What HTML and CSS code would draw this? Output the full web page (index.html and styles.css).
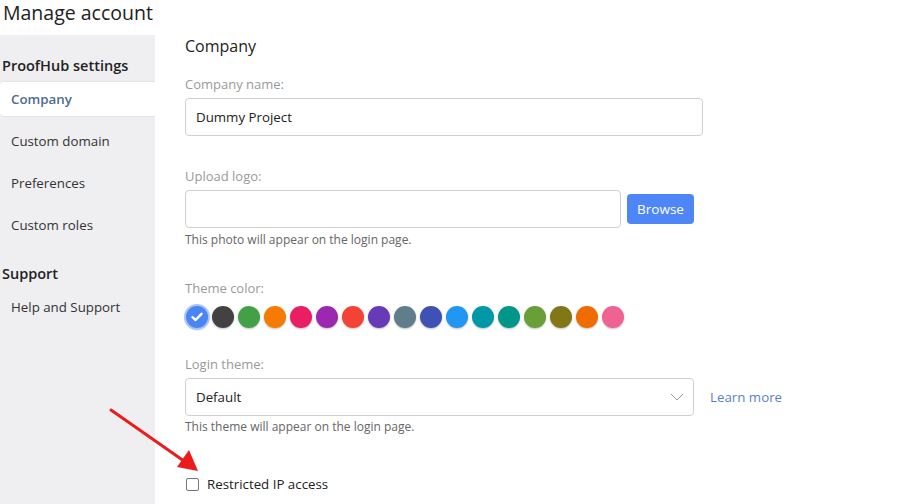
FILE: index.html
```html
<!DOCTYPE html>
<html>
<head>
<meta charset="utf-8">
<link rel="stylesheet" href="styles.css">
</head>
<body>
<header class="top">Manage account</header>
<div class="layout">
  <nav class="sidebar">
    <div class="group-title first">ProofHub settings</div>
    <div class="item active">Company</div>
    <div class="item">Custom domain</div>
    <div class="item">Preferences</div>
    <div class="item">Custom roles</div>
    <div class="group-title">Support</div>
    <div class="item">Help and Support</div>
  </nav>
  <main class="main">
    <h1 class="title">Company</h1>

    <div class="label l-first">Company name:</div>
    <div class="field w-name">Dummy Project</div>

    <div class="label">Upload logo:</div>
    <div class="upload-row">
      <div class="field w-upload"></div>
      <button class="browse">Browse</button>
    </div>
    <div class="help">This photo will appear on the login page.</div>

    <div class="label">Theme color:</div>
    <div class="swatches">
      <span class="sw selected" style="background:#4b85f2">
        <svg width="12" height="10" viewBox="0 0 12 10"><path d="M1.5 5.2 L4.6 8 L10.5 1.8" fill="none" stroke="#fff" stroke-width="2.4" stroke-linecap="round" stroke-linejoin="round"/></svg>
      </span>
      <span class="sw" style="background:#424242"></span>
      <span class="sw" style="background:#43a047"></span>
      <span class="sw" style="background:#f57c00"></span>
      <span class="sw" style="background:#e91e63"></span>
      <span class="sw" style="background:#9c27b0"></span>
      <span class="sw" style="background:#f44336"></span>
      <span class="sw" style="background:#673ab7"></span>
      <span class="sw" style="background:#607d8b"></span>
      <span class="sw" style="background:#3f51b5"></span>
      <span class="sw" style="background:#2196f3"></span>
      <span class="sw" style="background:#0097a7"></span>
      <span class="sw" style="background:#009688"></span>
      <span class="sw" style="background:#689f38"></span>
      <span class="sw" style="background:#827717"></span>
      <span class="sw" style="background:#ef6c00"></span>
      <span class="sw" style="background:#f06292"></span>
    </div>

    <div class="label l-login">Login theme:</div>
    <div class="select-row">
      <div class="field w-select select">
        <span>Default</span>
        <svg width="14" height="8" viewBox="0 0 14 8"><path d="M1 1 L7 7 L13 1" fill="none" stroke="#9a9a9a" stroke-width="1"/></svg>
      </div>
      <a class="learn">Learn more</a>
    </div>
    <div class="help help-tight">This theme will appear on the login page.</div>

    <label class="check-row">
      <span class="checkbox"></span>
      <span class="check-label">Restricted IP access</span>
    </label>
  </main>
</div>
<svg class="arrow" width="898" height="504" viewBox="0 0 898 504">
  <line x1="111" y1="410" x2="184" y2="461" stroke="#ea1c1c" stroke-width="3" stroke-linecap="round"/>
  <polygon points="198,471 177,467 189,450" fill="#ea1c1c"/>
</svg>
</body>
</html>
```
FILE: styles.css
```css
* { box-sizing: border-box; }
html, body { margin: 0; padding: 0; background: #fff; }
body {
  font-family: "Open Sans", "Noto Sans", sans-serif;
  color: #333;
  width: 898px;
  height: 504px;
  overflow: hidden;
  position: relative;
}
.top {
  height: 35px;
  font-size: 19.5px;
  line-height: 26px;
  padding-left: 3px;
  color: #222;
}
.layout { display: flex; height: 469px; }
.sidebar {
  width: 155px;
  flex: none;
  background: #efeff1;
  display: flex;
  flex-direction: column;
}
.group-title {
  font-size: 14.5px;
  font-weight: 600;
  color: #222;
  line-height: 20px;
  padding: 18px 0 0 2px;
  margin-bottom: 2px;
}
.group-title.first { padding-top: 21px; }
.item {
  height: 36px;
  margin: 3px 0;
  line-height: 36px;
  padding-left: 11px;
  font-size: 13.3px;
  color: #333;
}
.item.active {
  background: #fff;
  border-top: 1px solid #e4e4e6;
  border-bottom: 1px solid #e4e4e6;
  border-radius: 4px 0 0 4px;
  line-height: 34px;
  color: #4f6a8c;
  font-weight: 600;
}
.main { flex: 1; padding-left: 30px; }
.title {
  margin: 0;
  font-size: 16px;
  font-weight: 400;
  line-height: 22px;
  color: #222;
}
.label {
  font-size: 13px;
  line-height: 18px;
  color: #9a9a9a;
  margin-top: 31px;
  margin-bottom: 5px;
}
.label.l-first { margin-top: 18px; }
.label.l-login { margin-top: 27px; }
.field {
  height: 38px;
  border: 1px solid #cfcfcf;
  border-radius: 4px;
  padding: 0 10px;
  line-height: 36px;
  font-size: 13.3px;
  color: #222;
}
.w-name { width: 518px; }
.upload-row { display: flex; align-items: center; gap: 6px; }
.w-upload { width: 436px; }
.browse {
  width: 67px;
  height: 30px;
  border: none;
  border-radius: 4px;
  background: #4e86f7;
  color: #fff;
  font-family: inherit;
  font-size: 13.5px;
  padding: 0;
}
.help {
  font-size: 12px;
  line-height: 16px;
  color: #666;
  margin-top: 4px;
}
.help-tight { margin-top: 3px; }
.swatches {
  display: flex;
  gap: 4px;
  margin-top: 9px;
  padding-left: 1px;
}
.sw {
  width: 22px;
  height: 22px;
  border-radius: 50%;
  box-shadow: 0 1px 2px rgba(0,0,0,0.25);
  display: flex;
  align-items: center;
  justify-content: center;
}
.sw.selected { box-shadow: 0 0 0 2px #a8c5fb, 0 1px 3px rgba(0,0,0,0.3); }
.select-row { display: flex; align-items: center; gap: 16px; }
.w-select { width: 509px; }
.select {
  display: flex;
  align-items: center;
  justify-content: space-between;
  padding-right: 9px;
}
.learn { color: #5b7fcf; font-size: 13.3px; }
.check-row {
  display: flex;
  align-items: center;
  margin-top: 40px;
  padding-left: 1px;
}
.checkbox {
  width: 13px;
  height: 13px;
  border: 1px solid #777;
  border-radius: 2px;
  background: #fff;
}
.check-label { margin-left: 8px; font-size: 13.3px; color: #222; }
.arrow { position: absolute; left: 0; top: 0; pointer-events: none; }
```
